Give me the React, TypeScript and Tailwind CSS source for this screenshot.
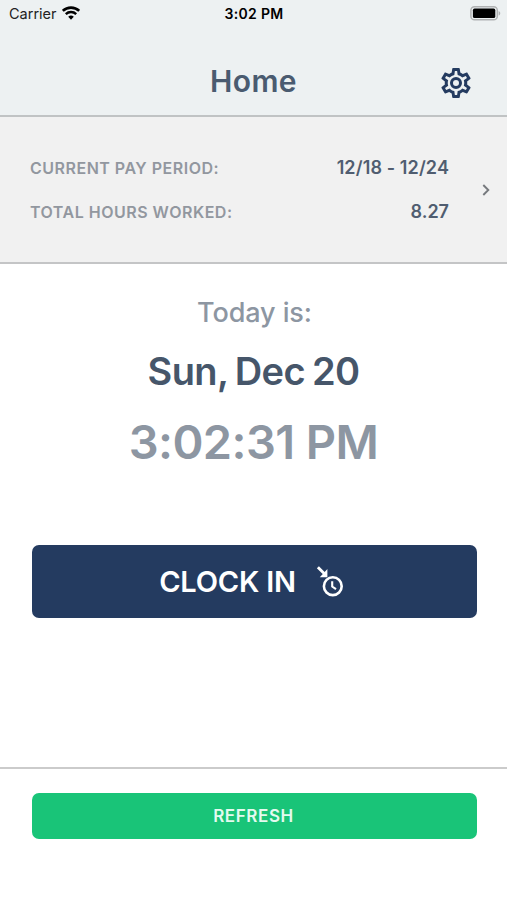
const payPeriod = {
  range: "12/18 - 12/24",
  hours: "8.27",
};

function WifiIcon() {
  return (
    <svg className="mb-0.5" width="18" height="14" viewBox="0 0 18 14" fill="none" stroke="#000">
      <path d="M0.8 4.9a11.8 11.8 0 0 1 16.4 0" strokeWidth="2.6" />
      <path d="M3.8 8.1a7.5 7.5 0 0 1 10.4 0" strokeWidth="2.4" />
      <path d="M9 13.7l-2.8-2.9a4 4 0 0 1 5.6 0z" fill="#000" stroke="none" />
    </svg>
  );
}

function BatteryIcon() {
  return (
    <svg className="mb-0.5" width="31" height="15" viewBox="0 0 31 15" fill="none">
      <rect x="0.9" y="0.8" width="26.4" height="13" rx="3.6" stroke="#b0b2b3" strokeWidth="1.5" />
      <rect x="2.9" y="2.6" width="22.4" height="9.4" rx="1.6" fill="#000" />
      <path d="M28.6 5c2.2.8 2.2 3.8 0 4.6z" fill="#b0b2b3" />
    </svg>
  );
}

function CogIcon() {
  return (
    <svg className="size-9" viewBox="0 0 24 24" fill="#243b60">
      <path d="M12,8A4,4 0 0,1 16,12A4,4 0 0,1 12,16A4,4 0 0,1 8,12A4,4 0 0,1 12,8M12,10A2,2 0 0,0 10,12A2,2 0 0,0 12,14A2,2 0 0,0 14,12A2,2 0 0,0 12,10M10,22C9.75,22 9.54,21.82 9.5,21.58L9.13,18.93C8.5,18.68 7.96,18.34 7.44,17.94L4.95,18.95C4.73,19.03 4.46,18.95 4.34,18.73L2.34,15.27C2.21,15.05 2.27,14.78 2.46,14.63L4.57,12.97L4.5,12L4.57,11L2.46,9.37C2.27,9.22 2.21,8.95 2.34,8.73L4.34,5.27C4.46,5.05 4.73,4.96 4.95,5.05L7.44,6.05C7.96,5.66 8.5,5.32 9.13,5.07L9.5,2.42C9.54,2.18 9.75,2 10,2H14C14.25,2 14.46,2.18 14.5,2.42L14.87,5.07C15.5,5.32 16.04,5.66 16.56,6.05L19.05,5.05C19.27,4.96 19.54,5.05 19.66,5.27L21.66,8.73C21.79,8.95 21.73,9.22 21.54,9.37L19.43,11L19.5,12L19.43,13L21.54,14.63C21.73,14.78 21.79,15.05 21.66,15.27L19.66,18.73C19.54,18.95 19.27,19.04 19.05,18.95L16.56,17.95C16.04,18.34 15.5,18.68 14.87,18.93L14.5,21.58C14.46,21.82 14.25,22 14,22H10M11.25,4L10.88,6.61C9.68,6.86 8.62,7.5 7.85,8.39L5.44,7.35L4.69,8.65L6.8,10.2C6.4,11.37 6.4,12.64 6.8,13.8L4.68,15.36L5.43,16.66L7.86,15.62C8.63,16.5 9.68,17.14 10.87,17.38L11.24,20H12.76L13.13,17.39C14.32,17.14 15.37,16.5 16.14,15.62L18.57,16.66L19.32,15.36L17.2,13.81C17.6,12.64 17.6,11.37 17.2,10.2L19.31,8.65L18.56,7.35L16.15,8.39C15.38,7.5 14.32,6.86 13.12,6.62L12.75,4H11.25Z" />
    </svg>
  );
}

function ClockInIcon() {
  return (
    <svg width="28" height="32" viewBox="0 0 28 32" fill="none" stroke="#fff">
      <path d="M1.9 1.2l6.8 6.8" strokeWidth="2.9" />
      <path d="M11.4 2.9v8.3H3.8z" fill="#fff" stroke="none" />
      <circle cx="16.8" cy="20.2" r="8.9" strokeWidth="2.6" />
      <path d="M16.2 15.2v5.3l3.8 2.7" strokeWidth="2.1" />
    </svg>
  );
}

function StatusBar() {
  return (
    <div className="grid h-7 grid-cols-3 items-center px-[8px] pl-[9px] text-[14.5px] text-black">
      <div className="flex items-center gap-[5px]">
        <span className="text-[#222]">Carrier</span>
        <WifiIcon />
      </div>
      <div className="pb-0.5 text-center text-[14px] font-semibold tracking-[0.3px]">3:02 PM</div>
      <div className="-mr-[2px] flex justify-end">
        <BatteryIcon />
      </div>
    </div>
  );
}

export default function App() {
  return (
    <div className="flex h-[900px] w-[507px] flex-col overflow-hidden bg-white font-['Inter',sans-serif]">
      {/* Header */}
      <header className="h-[117px] border-b-2 border-[#c0c3c4] bg-[#edf1f2]">
        <StatusBar />
        <div className="grid grid-cols-[1fr_auto_1fr] items-center px-[33px] pt-[33px]">
          <span />
          <h1 className="text-[30px] leading-9 font-semibold tracking-[0.4px] text-[#4a5b70]">Home</h1>
          <button className="justify-self-end pt-[4px]">
            <CogIcon />
          </button>
        </div>
      </header>

      {/* Pay period */}
      <section className="flex h-[147px] items-center border-b-2 border-[#c4c5c6] bg-[#f1f1f1] pl-[30px]">
        <div className="flex w-[419px] flex-col gap-5">
          <div className="flex items-center justify-between">
            <span className="text-[16px] leading-6 font-semibold tracking-[0.5px] text-[#92979f]">
              CURRENT PAY PERIOD:
            </span>
            <span className="text-[18px] leading-6 font-semibold tracking-[0.12px] text-[#505d70]">
              {payPeriod.range}
            </span>
          </div>
          <div className="flex items-center justify-between">
            <span className="text-[16px] leading-6 font-semibold tracking-[0.5px] text-[#92979f]">
              TOTAL HOURS WORKED:
            </span>
            <span className="text-[18px] leading-6 font-semibold text-[#505d70]">{payPeriod.hours}</span>
          </div>
        </div>
        <svg className="ml-[33px]" width="8" height="12" viewBox="0 0 8 12" fill="none">
          <path d="M1.3 1l5 5-5 5" stroke="#76797d" strokeWidth="1.9" />
        </svg>
      </section>

      {/* Current date and time */}
      <main className="flex h-[503px] flex-col items-center pt-[33px] pr-[30px] pl-[32px]">
        <p className="text-[27px] leading-8 font-medium tracking-[-0.1px] text-[#8d96a2]">Today is:</p>
        <p className="mt-[20px] pr-[2px] text-[38px] leading-11 font-semibold tracking-[-0.6px] text-[#46566a] [word-spacing:-2px]">
          Sun, Dec 20
        </p>
        <p className="mt-[21px] pr-[2px] text-[47px] leading-14 font-semibold tracking-[-0.6px] text-[#8d96a2]">
          3:02:31 PM
        </p>
        <button className="mt-[75px] flex h-[73px] w-[445px] items-center justify-center gap-[20px] rounded-[7px] bg-[#243b60] pr-[6px]">
          <span className="text-[29px] font-semibold tracking-[-0.2px] text-white">CLOCK IN</span>
          <ClockInIcon />
        </button>
      </main>

      {/* Footer */}
      <footer className="flex flex-1 flex-col items-center border-t-2 border-[#cbcbcb] pt-6 pr-[30px] pl-[32px]">
        <button className="h-[46px] w-[445px] rounded-[7px] bg-[#19c478] pt-[2px] pr-[2px] text-[17px] font-semibold tracking-[0.6px] text-[#e4faef]">
          REFRESH
        </button>
      </footer>
    </div>
  );
}
